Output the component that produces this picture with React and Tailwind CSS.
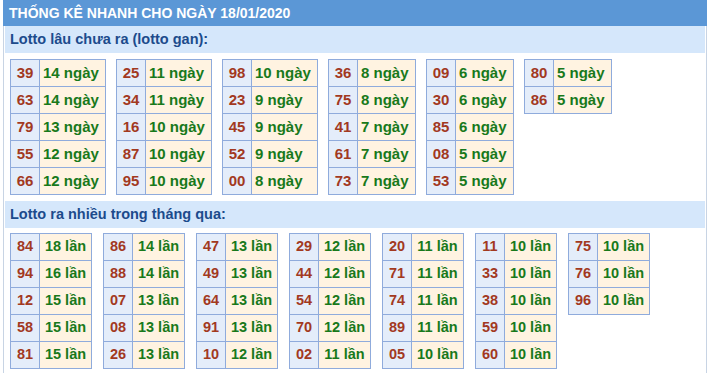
import React from 'react';

const gan = [
  [['39', 14], ['63', 14], ['79', 13], ['55', 12], ['66', 12]],
  [['25', 11], ['34', 11], ['16', 10], ['87', 10], ['95', 10]],
  [['98', 10], ['23', 9], ['45', 9], ['52', 9], ['00', 8]],
  [['36', 8], ['75', 8], ['41', 7], ['61', 7], ['73', 7]],
  [['09', 6], ['30', 6], ['85', 6], ['08', 5], ['53', 5]],
  [['80', 5], ['86', 5]],
];

const nhieu = [
  [['84', 18], ['94', 16], ['12', 15], ['58', 15], ['81', 15]],
  [['86', 14], ['88', 14], ['07', 13], ['08', 13], ['26', 13]],
  [['47', 13], ['49', 13], ['64', 13], ['91', 13], ['10', 12]],
  [['29', 12], ['44', 12], ['54', 12], ['70', 12], ['02', 11]],
  [['20', 11], ['71', 11], ['74', 11], ['89', 11], ['05', 10]],
  [['11', 10], ['33', 10], ['38', 10], ['59', 10], ['60', 10]],
  [['75', 10], ['76', 10], ['96', 10]],
];

const SectionTitle = ({ children }) => (
  <div className="h-[27px] bg-[#d5e7fb] pl-[5px] flex items-center text-[14.5px] font-bold text-[#1c4b8c]">
    {children}
  </div>
);

// one small table: loto number | count
const LotoTable = ({ rows, unit, wide }) => (
  <div
    className={
      'grid self-start border-l border-t border-[#8fabdc] ' +
      (unit === 'ngày' ? (wide ? 'grid-cols-[29px_66px]' : 'grid-cols-[29px_58px]') : 'grid-cols-[29px_52px]')
    }
  >
    {rows.map(([num, count]) => (
      <React.Fragment key={num}>
        <div className="h-[27px] border-r border-b border-[#8fabdc] bg-[#e4edfa] flex items-center justify-center text-[#a2391f]">
          {num}
        </div>
        <div
          className={
            'h-[27px] border-r border-b border-[#8fabdc] bg-[#fff3e1] flex items-center text-[#18791b] ' +
            (unit === 'ngày' ? 'pl-[3px]' : 'justify-center')
          }
        >
          {count} {unit}
        </div>
      </React.Fragment>
    ))}
  </div>
);

const App = () => {
  return (
    <div className="w-[715px] h-[373px] overflow-hidden bg-white font-['Liberation_Sans',Arial,sans-serif]">
      <div className="ml-[3px] w-[704px]">
        {/* header */}
        <div className="h-[26px] bg-[#5b97d6] pl-[6px] flex items-center text-[14px] font-bold text-white">
          THỐNG KÊ NHANH CHO NGÀY 18/01/2020
        </div>

        <div className="border-x border-[#c8d4e4] px-[1px] h-[347px]">
          <SectionTitle>Lotto lâu chưa ra (lotto gan):</SectionTitle>
          <div className="mt-[6px] pl-[5px] flex gap-[10px] text-[15px] font-bold">
            {gan.map((rows, i) => (
              <LotoTable key={i} rows={rows} unit="ngày" wide={rows[0][1] >= 10} />
            ))}
          </div>

          <div className="mt-[6px]">
            <SectionTitle>Lotto ra nhiều trong tháng qua:</SectionTitle>
          </div>
          <div className="mt-[5px] pl-[5px] flex gap-[11px] text-[14.5px] font-bold">
            {nhieu.map((rows, i) => (
              <LotoTable key={i} rows={rows} unit="lần" />
            ))}
          </div>
        </div>
      </div>
    </div>
  );
};

export default App;
